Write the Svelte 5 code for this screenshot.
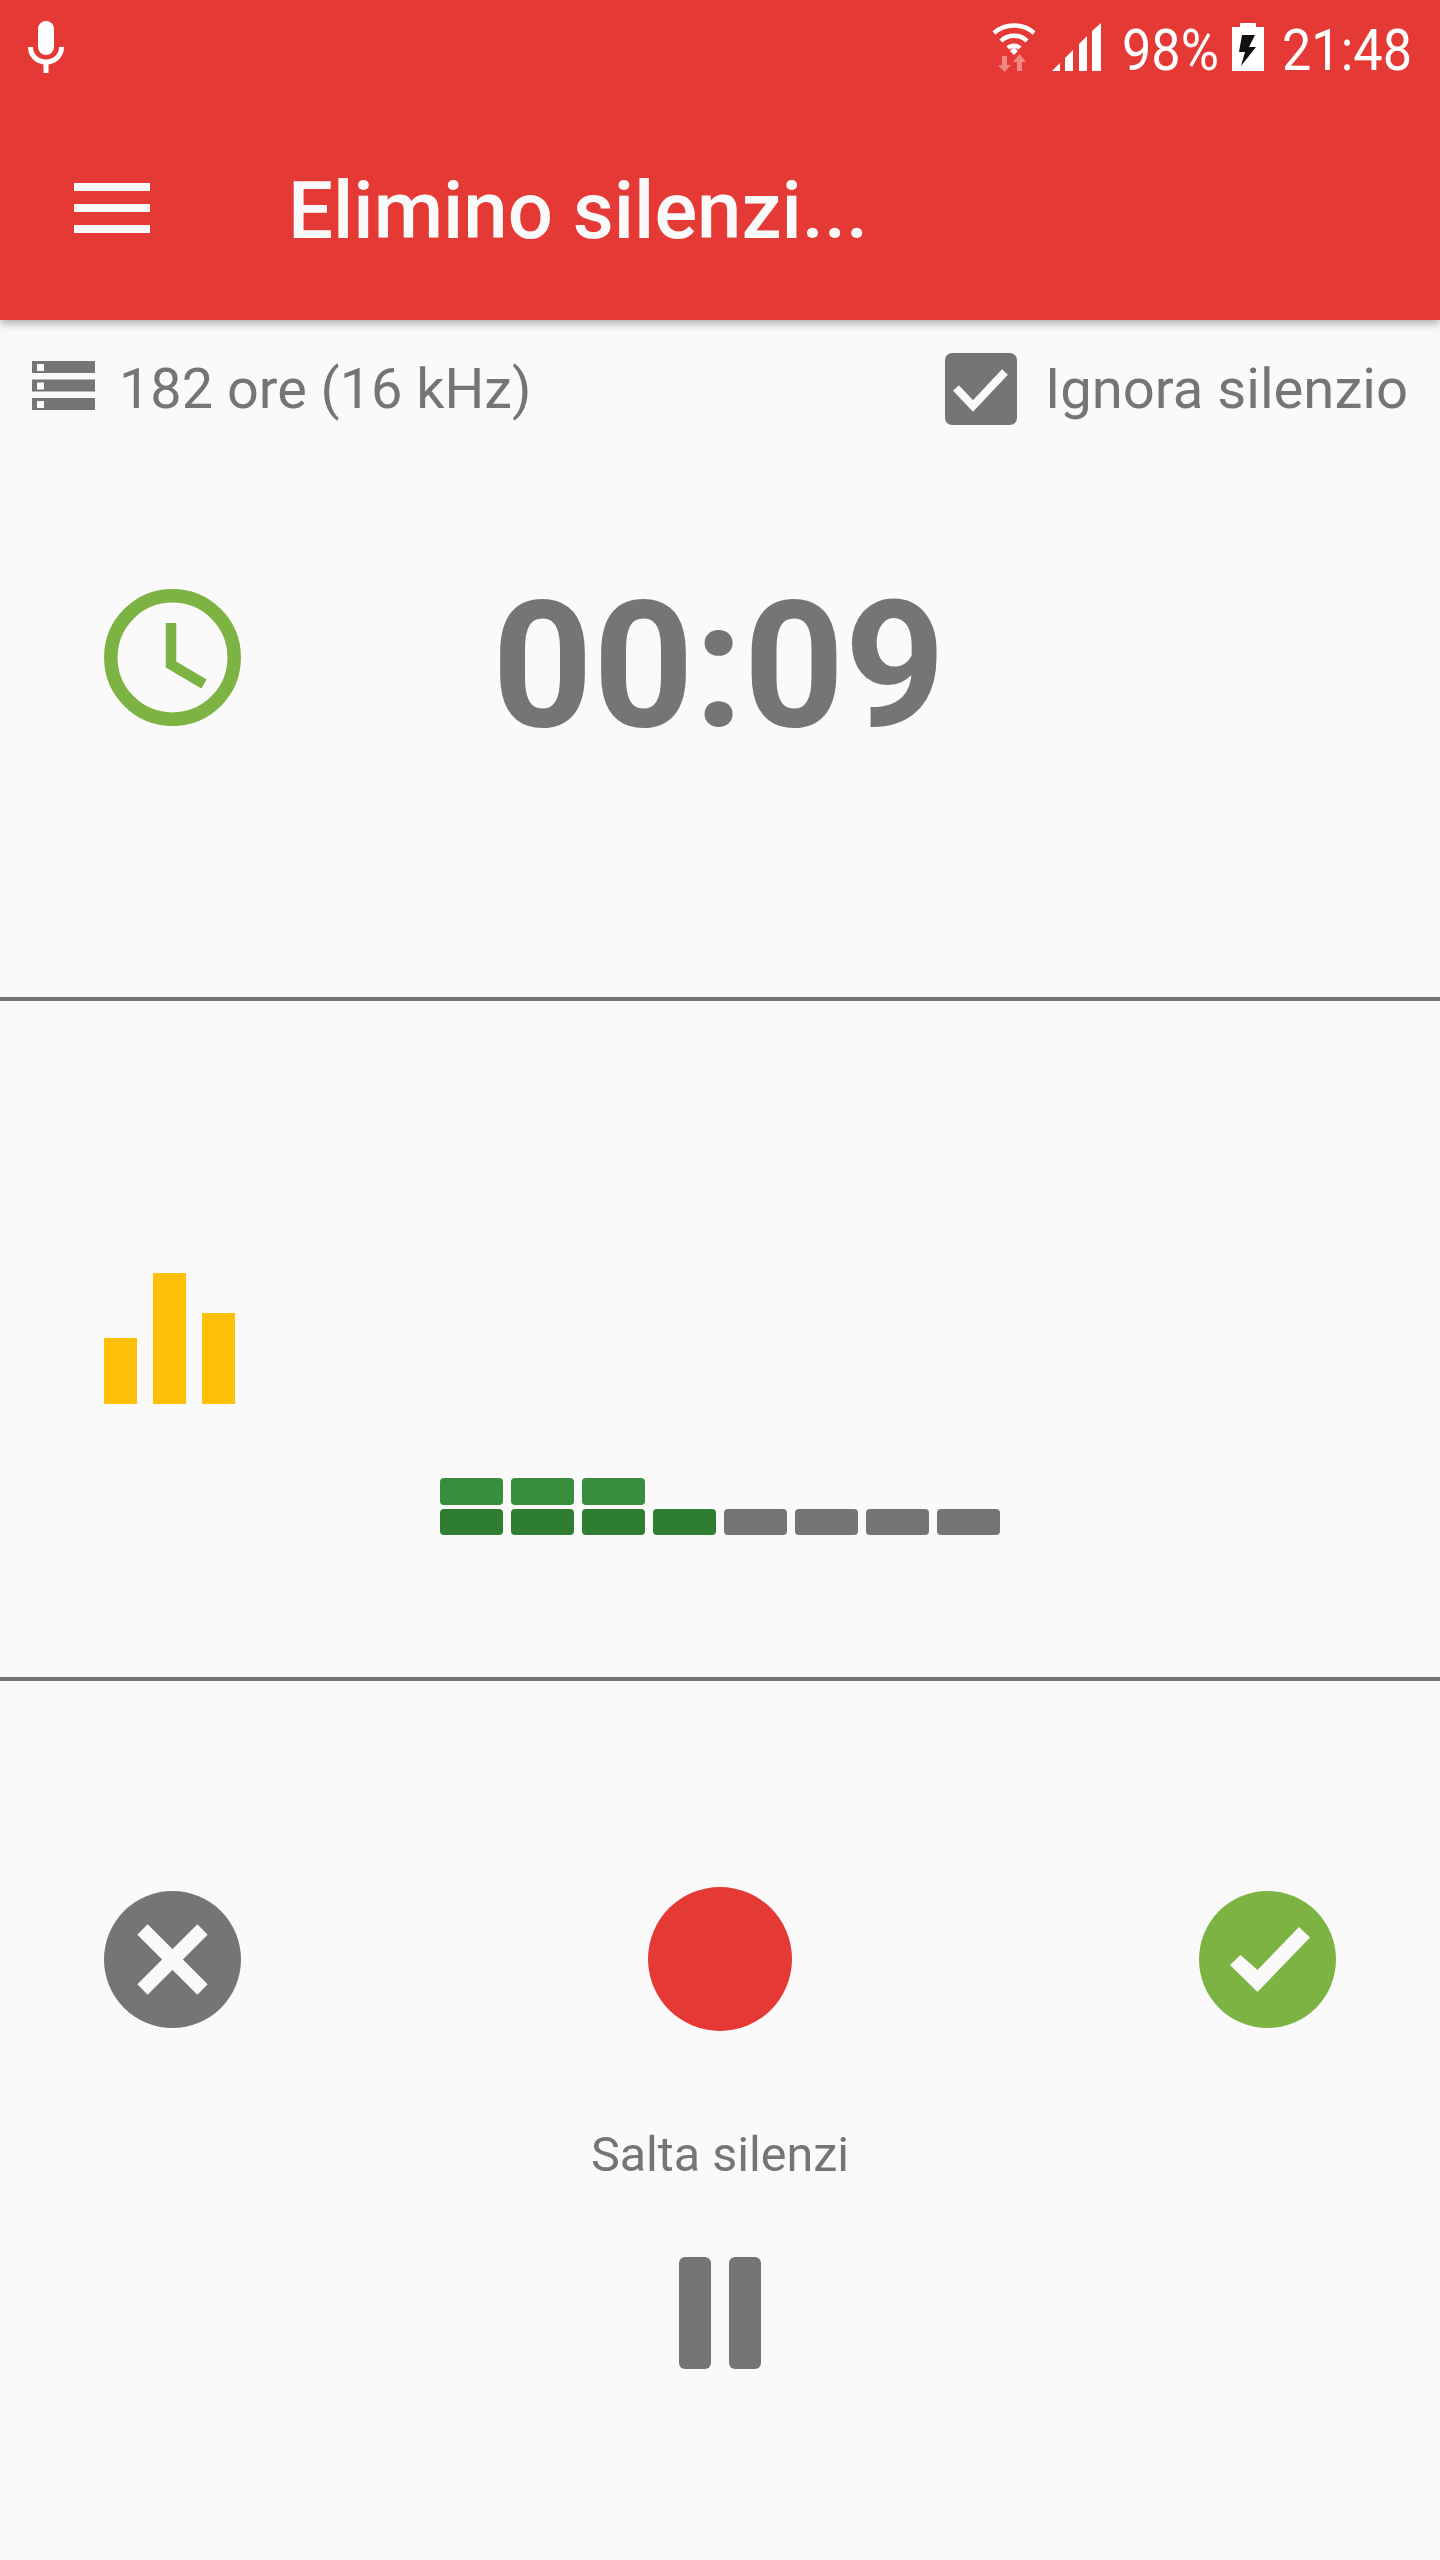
<script>
  const topLevel = 3;
  const bottomLevel = 4;
  const cells = [0, 1, 2, 3, 4, 5, 6, 7];
</script>

<div class="app">
  <header class="appbar">
    <div class="status">
      <svg class="mic" width="36" height="52" viewBox="0 0 36 52">
        <rect x="10" y="0" width="16" height="34" rx="8" fill="#fff" />
        <path d="M2.5 26c0 9 7 15 15.500 15s15.500-6 15.500-15" fill="none" stroke="#fff" stroke-width="5" />
        <rect x="15.500" y="40" width="5" height="12" fill="#fff" />
      </svg>
      <div class="status-right">
        <svg class="wifi" width="44" height="50" viewBox="0 0 44 50">
          <path d="M2 11C13 1 31 1 42 11" fill="none" stroke="#fff" stroke-width="4.500" />
          <path d="M9 19C16 12 28 12 35 19" fill="none" stroke="#fff" stroke-width="4.500" />
          <path d="M16 26C19 23 25 23 28 26" fill="none" stroke="#fff" stroke-width="4.500" />
          <path d="M18 29L22 25L26 29L22 33Z" fill="#fff" />
          <path d="M10 34h5v9h4l-6.500 7L6 43h4z" fill="#fff" opacity=".4" />
          <path d="M30 49h-5v-9h-4l6.500-8 6.500 8h-4z" fill="#fff" opacity=".4" />
        </svg>
        <svg class="signal" width="49" height="48" viewBox="0 0 49 48">
          <path d="M0 48L8 40V48ZM13 48V35L21 27V48ZM27 48V21L35 13V48ZM40 48V8L49 0V48Z" fill="#fff" />
        </svg>
        <span class="clip pct"><span class="narrow">98%</span></span>
        <svg class="battery" width="32" height="48" viewBox="0 0 32 48">
          <path d="M8 0H24V4H32V48H0V4H8Z" fill="#fff" />
          <path d="M10 12H23L17 24H24L9 43L13 29H7Z" fill="#111" />
        </svg>
        <span class="clip clock-text"><span class="narrow">21:48</span></span>
      </div>
    </div>
    <div class="toolbar">
      <div class="menu"><i></i><i></i><i></i></div>
      <h1>Elimino silenzi...</h1>
    </div>
  </header>

  <section class="timer">
    <div class="info">
      <div class="storage">
        <svg width="63" height="49" viewBox="0 0 63 49">
          <path d="M0 0H63V12H0ZM0 18.500H63V30.500H0ZM0 37H63V49H0Z" fill="#757575" />
          <path d="M5 3H12V10H5ZM5 21.500H12V28.500H5ZM5 40H12V47H5Z" fill="#fafafa" />
        </svg>
        <span>182 ore (16 kHz)</span>
      </div>
      <div class="ignore">
        <svg width="72" height="72" viewBox="0 0 72 72">
          <rect width="72" height="72" rx="7" fill="#757575" />
          <path d="M11 35L28 53L60 19" fill="none" stroke="#fafafa" stroke-width="8" />
        </svg>
        <span>Ignora silenzio</span>
      </div>
    </div>
    <div class="time-row">
      <svg width="137" height="137" viewBox="0 0 137 137">
        <circle cx="68.500" cy="68.500" r="61.700" fill="none" stroke="#7cb342" stroke-width="13.500" />
        <path d="M67 34V75.500L100 95" fill="none" stroke="#7cb342" stroke-width="10.500" />
      </svg>
      <div class="time">00:09</div>
    </div>
  </section>

  <section class="level">
    <svg class="bars" width="131" height="131" viewBox="0 0 131 131">
      <rect x="0" y="65" width="33" height="66" fill="#ffc107" />
      <rect x="49" y="0" width="33" height="131" fill="#ffc107" />
      <rect x="98" y="40" width="33" height="91" fill="#ffc107" />
    </svg>
    <div class="meter">
      {#each cells as c}
        <div class="cell" class:top={c < topLevel} class:off={c >= topLevel}></div>
      {/each}
      {#each cells as c}
        <div class="cell" class:low={c < bottomLevel} class:idle={c >= bottomLevel}></div>
      {/each}
    </div>
  </section>

  <section class="controls">
    <div class="actions">
      <svg width="137" height="137" viewBox="0 0 137 137">
        <circle cx="68.500" cy="68.500" r="68.500" fill="#757575" />
        <path d="M38.500 38.500L98.500 98.500M98.500 38.500L38.500 98.500" fill="none" stroke="#fafafa" stroke-width="14.500" />
      </svg>
      <button class="record" aria-label="Registra"></button>
      <svg width="137" height="137" viewBox="0 0 137 137">
        <circle cx="68.500" cy="68.500" r="68.500" fill="#7cb342" />
        <path d="M31 74L41.500 64L58.500 79L100 36L111 46.500L58.500 101Z" fill="#fafafa" />
      </svg>
    </div>
    <div class="skip">Salta silenzi</div>
    <div class="pause"><i></i><i></i></div>
  </section>
</div>

<style>
  :global(body) { margin: 0; background: #fafafa; }

  .app {
    width: 1440px; height: 2560px; overflow: hidden;
    background: #fafafa; color: #757575;
    font-family: Roboto, "Liberation Sans", sans-serif;
  }

  .appbar {
    position: relative; z-index: 2;
    height: 320px; background: #e53935; color: #fff;
    box-shadow: 0 3px 9px rgba(0,0,0,.35);
  }
  .status {
    height: 96px; padding: 21px 28px 0 28px; box-sizing: border-box;
    display: flex; justify-content: space-between; align-items: flex-start;
  }
  .status-right { display: flex; align-items: flex-start; height: 60px; }
  .wifi { margin-top: 1px; }
  .signal { margin: 2px 0 0 16px; }
  .battery { margin: 2px 0 0 14px; }
  .clip { display: block; height: 60px; line-height: 60px; font-size: 58px; white-space: nowrap; margin-top: -1px; }
  .pct { width: 96px; margin-left: 21px; }
  .clock-text { width: 130px; margin-left: 18px; }
  .narrow { display: inline-block; transform: scaleX(.9); transform-origin: left center; }

  .toolbar { height: 224px; display: flex; align-items: center; padding-left: 74px; }
  .menu { width: 76px; display: flex; flex-direction: column; gap: 13px; margin-right: 138px; }
  .menu i { display: block; height: 8px; background: #fafafa; }
  h1 { margin: 6px 0 0; font-size: 79.700px; font-weight: 500; color: #fafafa; line-height: 90px; }

  .timer { height: 677px; border-bottom: 4px solid #757575; }
  .info { display: flex; justify-content: space-between; align-items: flex-start; padding: 33px 32px 0 32px; }
  .storage { display: flex; align-items: flex-start; gap: 24px; padding-top: 8px; }
  .storage span { font-size: 55.800px; line-height: 66px; margin-top: -5px; }
  .ignore { display: flex; align-items: center; gap: 28px; }
  .ignore span { font-size: 56.200px; line-height: 72px; }

  .time-row { display: grid; grid-template-columns: 104px 137px 1fr; align-items: start; margin-top: 164px; }
  .time-row svg { grid-column: 2; }
  .time {
    margin-left: 251px; padding-top: 9px; font-size: 176px; font-weight: 700; line-height: 137px; white-space: nowrap;
  }

  .level { height: 680px; border-bottom: 4px solid #757575; padding-top: 272px; box-sizing: border-box; }
  .bars { display: block; margin-left: 104px; }
  .meter {
    display: grid; grid-template-columns: repeat(8, 63px); column-gap: 8px; row-gap: 4px;
    justify-content: center; margin-top: 74px;
  }
  .cell { height: 26.5px; border-radius: 4px; }
  .top { background: #388e3c; }
  .low { background: #2e7d32; }
  .idle { background: #757575; }
  .off { background: transparent; }

  .controls { padding-top: 206px; }
  .actions { display: flex; justify-content: space-between; align-items: center; padding: 0 104px; }
  .record { width: 144px; height: 144px; border: 0; padding: 0; border-radius: 50%; background: #e53935; }
  .skip { text-align: center; font-size: 48.500px; line-height: 56px; margin-top: 96px; }
  .pause { display: flex; justify-content: center; gap: 18px; margin-top: 74px; }
  .pause i { display: block; width: 32px; height: 112px; border-radius: 6px; background: #757575; }
</style>
